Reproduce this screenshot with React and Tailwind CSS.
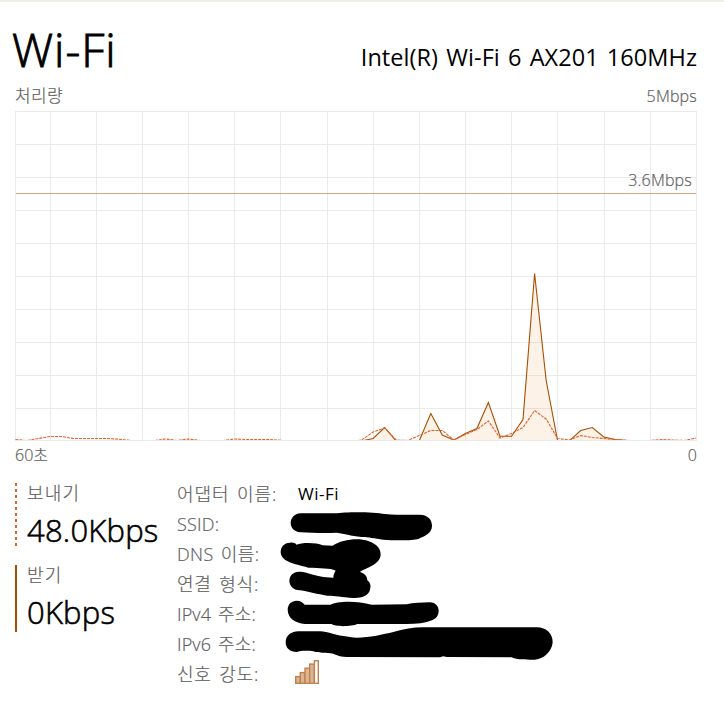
const SENT = [439.5,440.5,438.5,436.5,436.5,438.5,438.5,438.5,438.5,439.2,440.5,441.5,440.7,439,440.5,439,440.5,441.5,440.5,439,439.5,439.5,439.5,440.3,442,442,442,442,442,442,440,432,428,440,440.5,435.5,430.5,430.5,440,434.5,429.5,421,438,433.5,427.5,410.5,419,438.5,440,435.5,437.5,438.5,439.5,440.3,441.5,440.5,439.5,440,440.5,438];
const RECEIVED = [438.5,427.5,441,441,441,413.5,435,440,433.5,428.5,402.5,436.3,436.3,419.5,273.5,380,441,441,430.5,427.5,437,439.5,440.5,441];
const V_LINES = [15,50,96,142,188,234,280,327,373,419,465,511,557,604,650,696];
const H_LINES = [111,144,177,210,243,276,309,342,375,408,440];

const toPoints = (values, start) =>
  values.map((y, i) => `${(15.5 + (start + i) * 11.535).toFixed(1)},${y}`).join(" ");

function Chart() {
  const received = toPoints([441, ...RECEIVED], 30);
  return (
    <svg className="block" width="682" height="330" viewBox="15 111 682 330">
      <g fill="#eaeaea">
        {V_LINES.map((x) => <rect key={x} x={x} y="111" width="1" height="330" />)}
        {H_LINES.map((y) => <rect key={y} x="15" y={y} width="681" height="1" />)}
      </g>
      <clipPath id="plot"><rect x="15" y="111" width="681" height="329" /></clipPath>
      <g clipPath="url(#plot)" fill="none">
        <polygon points={received} fill="#e07b20" fillOpacity="0.1" />
        <polyline points={received} stroke="#a74f01" strokeWidth="1.1" />
        <polyline points={toPoints(SENT, 0)} stroke="#e0622a" strokeWidth="1.1" strokeDasharray="3 1" />
      </g>
      <rect x="16" y="193" width="680" height="1" fill="#d3a780" />
    </svg>
  );
}

function Scribbles() {
  return (
    <svg className="absolute left-[103px] top-[25px]" width="280" height="160" viewBox="280 505 280 160">
      <g transform="translate(270 505) scale(.33333)">
        <path d="M92 25L195 25C230 20 310 20 345 27C380 30 420 30 450 29C475 30 486 45 486 62C486 85 465 92 445 102C430 107 370 107 340 104C310 100 290 95 275 96C240 92 225 86 200 83C170 85 130 84 92 82C52 80 52 28 92 25Z" />
        <path d="M60 113C70 112 76 114 80 119C95 112 140 112 158 121L188 122C205 110 235 103 260 103C300 103 332 122 332 147C332 175 300 185 270 200C280 205 292 210 292 226C300 232 303 240 301 250C298 275 270 280 250 279C215 276 195 272 172 272C140 268 120 260 90 256C48 254 48 200 88 200C115 200 130 216 190 218C190 208 194 202 197 197C180 188 150 190 115 188C70 176 34 170 32 142C32 125 42 114 60 113Z" />
        <path d="M80 287C92 287 98 292 104 299L182 299C200 288 260 286 305 299L410 298C430 293 455 293 480 292C515 294 512 338 488 345C465 354 440 357 410 357L262 357C245 365 195 366 185 357L105 357C75 355 53 340 53 313C54 296 65 288 80 287Z" />
      </g>
      <g transform="translate(280 600) scale(.33333)">
        <path d="M55 94L120 94C145 95 160 105 190 108C205 109 215 113 230 113C270 113 310 103 340 96C370 88 400 82 430 82L770 82C800 83 818 100 818 127C816 155 790 178 765 179C740 179 710 180 695 172L500 171L490 169L480 172L200 171C175 171 165 162 152 160C130 159 110 158 100 154C80 151 60 153 50 156C30 156 17 145 17 127C17 105 35 95 55 94Z" />
      </g>
    </svg>
  );
}

function SignalIcon() {
  return (
    <svg width="24" height="24" viewBox="0 0 24 24" className="-ml-[3px]">
      <g fill="#dfb493" stroke="#bd8252" strokeWidth="1.4">
        <rect x="0.7" y="16.6" width="4.7" height="6.7" />
        <rect x="5.3" y="12.6" width="4.7" height="10.7" />
        <rect x="10" y="8.2" width="4.7" height="15.1" />
        <rect x="14.7" y="4.1" width="4.7" height="19.2" />
        <rect x="19.4" y="0.7" width="3.9" height="22.6" fill="#fff" />
      </g>
    </svg>
  );
}

const DETAILS = [
  ["어댑터 이름:", "tracking-[0.9px] [word-spacing:2px]"],
  ["SSID:", "tracking-[0.2px]"],
  ["DNS 이름:", "tracking-[0.4px] [word-spacing:2px]"],
  ["연결 형식:", "tracking-[0.8px] [word-spacing:2px]"],
  ["IPv4 주소:", "tracking-[0.15px] [word-spacing:2px]"],
  ["IPv6 주소:", "tracking-[0.15px] [word-spacing:2px]"],
  ["신호 강도:", "tracking-[0.8px] [word-spacing:2px]"],
];

export default function App() {
  return (
    <div className="h-[707px] w-[724px] overflow-hidden border-t-2 border-[#f0f0eb] bg-white font-['Open_Sans','Noto_Sans_CJK_KR',sans-serif] font-light text-[#606060] [-webkit-text-stroke:0.2px]">
      <header className="flex h-[83px] justify-between pl-[12px] pr-[27px] text-black">
        <h1 className="pt-[17px] text-[46px] leading-[60px] tracking-[1px] [-webkit-text-stroke:0.9px]">Wi-Fi</h1>
        <div className="pt-[38px] text-[23.5px] font-normal leading-[34px] tracking-[0.06px] [word-spacing:2px] [-webkit-text-stroke:0]">Intel(R) Wi-Fi 6 AX201 160MHz</div>
      </header>
      <div className="flex h-[26px] justify-between pl-[15px] pr-[27px] text-[16px] leading-[22px]">
        <span className="text-[17px] tracking-[0.3px]">처리량</span>
        <span className="tracking-[0.2px]">5Mbps</span>
      </div>
      <div className="relative ml-[15px] w-[682px]">
        <Chart />
        <span className="absolute right-[5px] top-[58px] text-[16px] leading-[22px] tracking-[0.2px]">3.6Mbps</span>
      </div>
      <div className="flex h-[37px] justify-between pl-[15px] pr-[27px] pt-[3px] text-[16px] leading-[22px]">
        <span>60초</span>
        <span>0</span>
      </div>
      <div className="flex pl-[15px] pt-[2px]">
        <div className="w-[162px]">
          <div className="flex h-[85px]">
            <svg width="2" height="64" className="mt-[3px] shrink-0"><path d="M1 0V64" stroke="#e0622a" strokeWidth="2" strokeDasharray="3 3" /></svg>
            <div className="pl-[10px]">
              <div className="h-[26px] text-[18px] leading-[26px] tracking-[1.2px]">보내기</div>
              <div className="text-[31px] leading-[48px] tracking-[0.2px] text-black [-webkit-text-stroke:0.6px]">48.0Kbps</div>
            </div>
          </div>
          <div className="flex">
            <div className="h-[67px] w-[2px] shrink-0 bg-[#a74f01]" />
            <div className="pl-[10px]">
              <div className="-mt-[3px] h-[26px] text-[18px] leading-[26px] tracking-[1.2px]">받기</div>
              <div className="text-[31px] leading-[48px] tracking-[0.2px] text-black [-webkit-text-stroke:0.6px]">0Kbps</div>
            </div>
          </div>
        </div>
        <div className="relative w-[400px]">
          {DETAILS.map(([label, tracking], i) => (
            <div key={label} className="flex h-[30px] text-[18px] leading-[28px]">
              <span className={`w-[121px] whitespace-nowrap ${tracking}`}>{label}</span>
              {i === 0 && <span className="text-[17px] font-normal leading-[28px] tracking-[0.5px] text-black [-webkit-text-stroke:0]">Wi-Fi</span>}
              {i === 6 && <SignalIcon />}
            </div>
          ))}
          <Scribbles />
        </div>
      </div>
    </div>
  );
}
